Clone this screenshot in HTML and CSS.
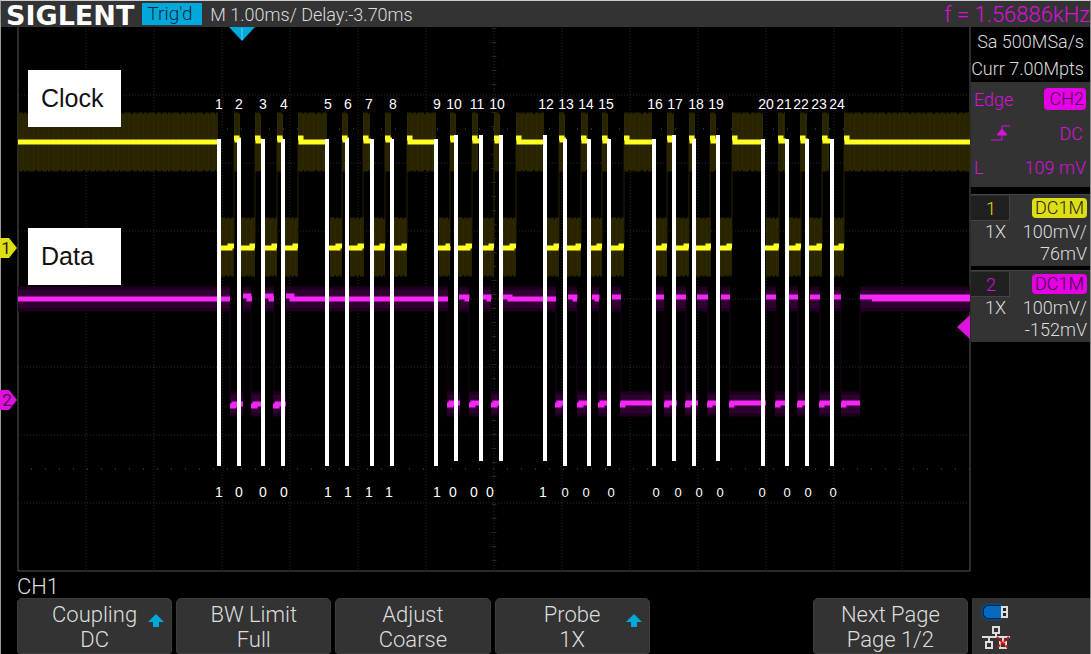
FILE: index.html
```html
<!DOCTYPE html>
<html lang="en">
<head>
<meta charset="utf-8">
<title>SIGLENT oscilloscope</title>
<link rel="stylesheet" href="styles.css">
</head>
<body>
<div class="scope">
  <header class="topbar">
    <span class="logo">SIGLENT</span>
    <span class="trig">Trig'd</span>
    <span class="timebase">M 1.00ms/ Delay:-3.70ms</span>
    <span class="freq">f = 1.56886kHz</span>
  </header>
  <main class="middle">
    <svg class="plot" viewBox="0 27 971 545" role="img" aria-label="Clock and data traces">
      <defs>
        <path id="clk-high" d="M18 142H218M234 142h6M255 142h6M277 142h6M298 142H327M342 142h6M363 142h7M385 142h6M407 142H436M450 142h6M472 142h6M494 142h6M516 142H544M559 142h6M581 142h7M602 142h6M624 142H652M667 142h7M689 142h6M710 142h6M732 142H763M778 142h7M800 142h7M822 142h7M844 142H970"/>
        <path id="clk-low" d="M221 247H234M241 247H255M265 247H277M285 247H298M330 247H342M350 247H364M374 247H385M394 247H407M439 247H450M458 247H472M480 247H494M503 247H516M545 247H559M567 247H581M590 247H602M611 247H624M653 247H667M676 247H689M696 247H711M720 247H732M766 247H779M789 247H801M809 247H822M831 247H844"/>
        <path id="dat-high" d="M18 299H230M243 299H251M265 299H274M286 299H448M459 299H469M483 299H491M503 299H556M568 299H577M592 299H599M612 299H621M656 299H664M676 299H686M697 299H708M721 299H730M766 299H776M789 299H798M810 299H820M833 299H841M860 299H970"/>
        <path id="dat-low" d="M230 404H243M251 404H262M273 404H286M447 404H460M469 404H479M491 404H503M555 404H567M577 404H588M598 404H611M620 404H654M664 404H677M685 404H698M707 404H720M729 404H766M775 404H787M797 404H809M819 404H832M841 404H860"/>
      </defs>

      <g class="grid">
        <path class="dots" d="M86 28V571M154 28V571M222 28V571M290 28V571M358 28V571M426 28V571M494 28V571M562 28V571M630 28V571M698 28V571M766 28V571M834 28V571M902 28V571M18 95H970M18 163H970M18 231H970M18 299H970M18 367H970M18 435H970M18 503H970"/>
        <path class="ticks" d="M31 129H970M31 469H970"/>
        <path class="center" d="M494 28V571"/>
        <path class="frame" d="M18 27V571H970V27"/>
      </g>

      <g class="clock-band">
        <use href="#clk-high" class="solid"/><use href="#clk-high" class="ragged"/><use href="#clk-high" class="stripes"/>
        <use href="#clk-low" class="solid"/><use href="#clk-low" class="ragged"/><use href="#clk-low" class="stripes"/>
        <path class="edge" d="M234 142V247M255 142V247M277 142V247M298 142V247M342 142V247M363 142V247M385 142V247M407 142V247M450 142V247M472 142V247M494 142V247M516 142V247M559 142V247M581 142V247M602 142V247M624 142V247M667 142V247M689 142V247M710 142V247M732 142V247M779 142V247M801 142V247M822 142V247M844 142V247"/>
      </g>
      <g class="data-band">
        <use href="#dat-high" class="outer"/><use href="#dat-high" class="solid"/>
        <use href="#dat-low" class="outer"/><use href="#dat-low" class="solid"/>
        <path class="edge" d="M230 299V404M243 299V404M251 299V404M274 299V404M448 299V404M469 299V404M491 299V404M556 299V404M567 299V404M577 299V404M599 299V404M621 299V404M664 299V404M686 299V404M708 299V404M730 299V404M776 299V404M798 299V404M820 299V404M841 299V404M860 299V404"/>
      </g>

      <path class="clock-line" d="M18 142H218M234 138h3v2h4M255 138h3v3h4M277 138h3v2h3M298 138h3v4H327M342 138h3v2h4M363 138h3v3h5M385 138h3v2h4M407 138h3v4H436M450 138h3v2h4M472 138h3v3h4M494 138h3v3h4M516 138h3v4H544M559 138h3v2h4M581 138h3v3h4M602 138h3v3h4M624 138h3v4H653M667 138h3v2h4M689 138h3v3h4M710 138h3v3h4M732 138h3v4H763M778 138h3v3h5M800 138h3v3h5M822 138h3v3h5M844 138h3v4H970"/>
      <path class="clock-line" d="M221 248H230V246H234M240 248H252V246H255M263 248H274V246H277M284 248H295V246H298M329 248H338V246H342M349 248H360V246H364M373 248H382V246H385M393 248H404V246H407M438 248H448V246H450M457 248H468V246H472M480 248H491V246H494M502 248H512V246H516M546 248H556V246H559M567 248H578V246H581M589 248H599V246H602M611 248H621V246H624M655 248H664V246H667M675 248H686V246H689M696 248H708V246H711M720 248H729V246H732M765 248H776V246H779M789 248H798V246H801M809 248H819V246H822M831 248H841V246H844"/>
      <path class="data-line" d="M18 299H230M243 296h6v3h3M265 296h6v3h3M286 296h6v3H448M459 297h8v2h2M483 297h6v2h2M503 297h7v2H556M568 297h7v2h2M592 297h5v2h2M612 297H621M656 297H664M676 297H686M697 297H708M721 297H730M766 297H776M789 297H798M810 297H820M833 297H841M860 297H970M872 299H970"/>
      <path class="data-line" d="M230 406h4v-2H243M251 406h4v-2H262M273 406h4v-2H286M447 405h4v-2H460M469 405h4v-2H479M491 405h4v-2H503M555 405h4v-2H567M577 405h4v-2H588M598 405h4v-2H611M620 405h3v-2H654M664 405h3v-2H677M685 405h3v-2H698M707 405h3v-2H719M729 405h3v-2H766M775 405h3v-2H787M797 405h3v-2H809M819 405h3v-2H832M841 405h3v-2H860"/>

      <path class="bit-lines" d="M219 139V466M239 139V466M263 139V466M283 139V466M327 139V466M347 139V466M372 139V466M392 139V466M436 139V466M456 135V461M481 135V461M501 135V461M545 135V461M565 139V466M589 139V466M609 139V466M654 139V466M674 135V461M694 139V466M718 135V461M763 139V466M787 139V466M807 139V466M832 139V466"/>

      <g class="count">
        <text x="219" y="109">1</text><text x="239" y="109">2</text><text x="263" y="109">3</text><text x="284" y="109">4</text>
        <text x="328" y="109">5</text><text x="348" y="109">6</text><text x="369" y="109">7</text><text x="393" y="109">8</text>
        <text x="437" y="109">9</text><text x="454" y="109">10</text><text x="477" y="109">11</text><text x="497" y="109">10</text>
        <text x="546" y="109">12</text><text x="566" y="109">13</text><text x="586" y="109">14</text><text x="606" y="109">15</text>
        <text x="655" y="109">16</text><text x="675" y="109">17</text><text x="696" y="109">18</text><text x="716" y="109">19</text>
        <text x="766" y="109">20</text><text x="784" y="109">21</text><text x="801" y="109">22</text><text x="819" y="109">23</text><text x="837" y="109">24</text>
        <text x="219" y="497">1</text><text x="239" y="497">0</text><text x="263" y="497">0</text><text x="284" y="497">0</text>
        <text x="328" y="497">1</text><text x="348" y="497">1</text><text x="369" y="497">1</text><text x="389" y="497">1</text>
        <text x="437" y="497">1</text><text x="453" y="497">0</text><text x="474" y="497">0</text><text x="490" y="497">0</text>
        <text x="543" y="497">1</text>
      </g>
      <g class="count small">
        <text x="565" y="497">0</text><text x="586" y="497">0</text><text x="611" y="497">0</text>
        <text x="656" y="497">0</text><text x="678" y="497">0</text><text x="699" y="497">0</text><text x="720" y="497">0</text>
        <text x="762" y="497">0</text><text x="787" y="497">0</text><text x="808" y="497">0</text><text x="833" y="497">0</text>
      </g>

      <g class="note">
        <rect x="28" y="70" width="93" height="57"/><text x="41" y="107">Clock</text>
        <rect x="28" y="228" width="93" height="57"/><text x="41" y="265">Data</text>
      </g>

      <path class="cyan" d="M229 27H255L242 41Z"/><path class="cyan-mid" d="M242 28V40"/>
      <path class="yellow-mark" d="M0 238H9L17 248L9 258H0Z"/><text class="mark" x="6" y="254">1</text>
      <path class="magenta-mark" d="M0 390H9L17 400L9 410H0Z"/><text class="mark dim" x="7" y="406">2</text>
      <path class="magenta-mark" d="M970 315V339L957 327Z"/>
    </svg>

    <aside class="side">
      <div class="sample"><div>Sa 500MSa/s</div><div>Curr 7.00Mpts</div></div>
      <section class="trigger">
        <div class="row"><span>Edge</span><span class="badge ch2">CH2</span></div>
        <div class="row"><svg class="rise" viewBox="0 0 20 18" aria-label="Rising edge"><path d="M0 16H11V2H19"/><path class="head" d="M6 11L11 5L16 11Z"/></svg><span class="coupling">DC</span></div>
        <div class="row"><span>L</span><span>109 mV</span></div>
      </section>
      <section class="channel one">
        <div class="head-row"><span class="num">1</span><span class="badge">DC1M</span></div>
        <div class="row"><span class="probe">1X</span><span>100mV/</span></div>
        <div class="offset">76mV</div>
      </section>
      <section class="channel two">
        <div class="head-row"><span class="num">2</span><span class="badge">DC1M</span></div>
        <div class="row"><span class="probe">1X</span><span>100mV/</span></div>
        <div class="offset">-152mV</div>
      </section>
    </aside>
  </main>

  <footer class="bottom">
    <div class="menu-area">
      <div class="menu-title">CH1</div>
      <nav class="menu">
        <button class="soft"><span>Coupling<br>DC</span><svg class="up" viewBox="0 0 16 13"><path d="M8 0L16 8H11V13H5V8H0Z"/></svg></button>
        <button class="soft"><span>BW Limit<br>Full</span></button>
        <button class="soft"><span>Adjust<br>Coarse</span></button>
        <button class="soft"><span>Probe<br>1X</span><svg class="up" viewBox="0 0 16 13"><path d="M8 0L16 8H11V13H5V8H0Z"/></svg></button>
        <button class="soft last"><span>Next Page<br>Page 1/2</span></button>
      </nav>
    </div>
    <div class="status">
      <svg class="usb" viewBox="0 0 28 18" aria-label="USB drive"><path class="shell" d="M6 1H20V17H6L1 13V5Z"/><path class="body" d="M6 3H20V15H6L3 12V6Z"/><path class="plug" d="M21 4H26V14H21Z"/><path class="plug" d="M21 9H26"/></svg>
      <svg class="lan" viewBox="0 0 30 24" aria-label="LAN disconnected"><path class="wire" d="M12 2H18V8H12ZM15 8V12M1 12H29M8 12V17M5 17H11V23H5ZM22 12V17M19 17H25V23H19Z"/><path class="cross" d="M16 12L27 23M28 12L16 23"/></svg>
    </div>
  </footer>
</div>
</body>
</html>
```

FILE: styles.css
```css
* { box-sizing: border-box; }
body { margin: 0; background: #000; color: #ddd; font-family: Roboto, "Liberation Sans", sans-serif; font-weight: 300; }
.scope { min-height: 100vh; display: flex; flex-direction: column; border-left: 1px solid #999; border-right: 1px solid #888; border-top: 1px solid #ccc; }

.topbar { display: flex; align-items: center; height: 26px; background: #333; font-size: 18px; white-space: nowrap; }
.logo { margin-left: 5px; font: bold 27px/30px "DejaVu Sans", sans-serif; color: #fff; align-self: flex-start; }
.trig { margin-left: 8px; padding: 0 5px; width: 60px; height: 22px; line-height: 22px; font-size: 19px; background: #00a8dc; color: #072a38; }
.timebase { margin-left: 8px; }
.freq { margin-left: auto; font-size: 22px; color: #d911d9; }

.middle { display: flex; align-items: flex-start; }
.plot { flex: 1; min-width: 0; display: block; margin-left: -1px; }
.plot path, .plot use { fill: none; }
.grid .dots { stroke: #2b2b2b; stroke-dasharray: 1 2; }
.grid .ticks { stroke: #2e2e2e; stroke-width: 2; stroke-dasharray: 1 13; }
.grid .center { stroke: #262626; stroke-width: 5; stroke-dasharray: 1 13; }
.grid .frame { stroke: #555; }
.clock-band { stroke: #292400; }
.clock-band .solid { stroke-width: 56; }
.clock-band .ragged { stroke-width: 59; stroke-dasharray: 5 1 3 1 7 2 4 1; }
.clock-band .stripes { stroke: #2e2900; stroke-width: 55; stroke-dasharray: 1 4; }
.clock-band .edge { stroke: #262100; }
.data-band .outer { stroke: #1c001d; stroke-width: 25; }
.data-band .solid { stroke: #300031; stroke-width: 18; }
.data-band .edge { stroke: #1d001e; }
.clock-line { stroke: #ffff24; stroke-width: 5; }
.data-line { stroke: #f527f5; stroke-width: 5; }
.bit-lines { stroke: #fff; stroke-width: 4; }
.count { fill: #fff; font: 14px "Liberation Sans", sans-serif; text-anchor: middle; }
.count.small { font-size: 13px; }
.note rect { fill: #fff; }
.note text { fill: #111; font: 25px "Liberation Sans", sans-serif; }
.plot .cyan { fill: #00a8dc; }
.plot .cyan-mid { stroke: #5fd4f5; }
.plot .yellow-mark { fill: #dede14; }
.plot .magenta-mark { fill: #dd12dd; }
.mark { fill: #222; font-size: 17px; font-weight: 400; text-anchor: middle; }
.mark.dim { fill: #5a005a; }

.side { width: 119px; font-size: 18px; white-space: nowrap; }
.sample { height: 55px; padding: 1px 6px 0 0; text-align: right; line-height: 27px; }
.trigger { height: 105px; padding: 0 4px 0 3px; background: #333; color: #d911d9; margin-bottom: 7px; }
.row { display: flex; justify-content: space-between; align-items: center; }
.trigger .row { height: 34px; }
.badge { padding: 0 3px; border-radius: 4px; line-height: 20px; color: #222; }
.badge.ch2 { padding: 1px 2px 1px 6px; background: #e500e5; color: #4b004b; }
.rise { width: 20px; height: 18px; margin-left: 17px; fill: none; stroke: #d911d9; }
.rise .head { fill: #d911d9; }
.coupling { margin-right: 3px; }
.channel { height: 72px; margin-bottom: 4px; padding-right: 3px; background: #333; border-top: 1px solid #444; }
.head-row { display: flex; justify-content: space-between; align-items: center; height: 26px; }
.num { width: 39px; height: 25px; padding-left: 15px; line-height: 25px; background: #202020; border-right: 1px solid #444; border-bottom: 1px solid #444; }
.one .num { color: #dede14; }
.two .num { color: #d911d9; }
.one .badge { background: #dede14; }
.two .badge { background: #e500e5; color: #3b003b; }
.channel .row, .offset { height: 22px; line-height: 22px; }
.probe { margin-left: 14px; }
.offset { text-align: right; }

.bottom { display: flex; flex: 1; font-size: 22px; gap: 4px; }
.menu-area { flex: 1; display: flex; flex-direction: column; padding-left: 16px; }
.menu-title { height: 26px; line-height: 30px; }
.menu { flex: 1; display: grid; grid-template-columns: repeat(6, 1fr); gap: 4px; }
.soft { display: flex; align-items: center; justify-content: center; position: relative; padding: 2px 0 0; border: 1px solid #3d3d3d; border-radius: 5px 5px 3px 3px; background: #333; color: #ddd; font: inherit; line-height: 25px; }
.soft.last { grid-column: 6; }
.up { position: absolute; right: 7px; top: 15px; width: 16px; height: 13px; fill: #00a8dc; }
.status { width: 118px; margin-top: 26px; padding: 5px 9px; background: #333; display: flex; flex-direction: column; gap: 4px; }
.usb { width: 28px; height: 18px; }
.usb .shell { fill: #062a55; stroke: #0756a8; }
.usb .body { fill: #0868bd; }
.usb .plug { fill: #222; stroke: #ddd; stroke-width: 2; }
.lan { width: 30px; height: 24px; fill: none; }
.lan .wire { stroke: #ddd; stroke-width: 2; }
.lan .cross { stroke: #d41111; stroke-width: 2; stroke-dasharray: 3 1; }
```
